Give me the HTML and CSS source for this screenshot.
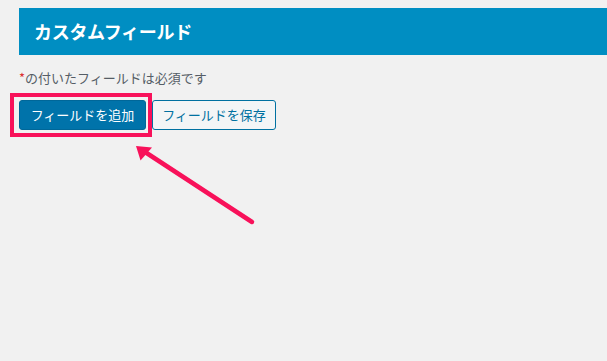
FILE: index.html
```html
<!DOCTYPE html>
<html lang="ja">
<head>
<meta charset="utf-8">
<title>カスタムフィールド</title>
<link rel="stylesheet" href="styles.css">
</head>
<body>
<div class="page">
  <h1 class="title">カスタムフィールド</h1>
  <p class="note"><span class="req">*</span>の付いたフィールドは必須です</p>
  <div class="actions">
    <span class="highlight">
      <button class="btn btn-primary" type="button">フィールドを追加</button>
    </span>
    <button class="btn btn-secondary" type="button">フィールドを保存</button>
  </div>
  <svg class="arrow" width="607" height="361" viewBox="0 0 607 361" aria-hidden="true">
    <line x1="252" y1="222" x2="142" y2="150" stroke="#f8115a" stroke-width="4.5" stroke-linecap="round"/>
    <polygon points="136,146 152,147.5 140.5,160.5" fill="#f8115a"/>
  </svg>
</div>
</body>
</html>
```
FILE: styles.css
```css
html, body {
  margin: 0;
  padding: 0;
  background: #f1f1f1;
}
body {
  font-family: "Noto Sans CJK JP", "Noto Sans", sans-serif;
  color: #50575e;
}
.page {
  position: relative;
  width: 607px;
  height: 361px;
  overflow: hidden;
  padding: 8px 0 0 19px;
  box-sizing: border-box;
}
.title {
  margin: 0;
  height: 47px;
  background: #008ec2;
  color: #fff;
  font-size: 18px;
  font-weight: 700;
  line-height: 47px;
  padding-left: 15px;
  letter-spacing: -0.3px;
}
.note {
  margin: 13px 0 0;
  font-size: 13px;
  line-height: 20px;
  color: #555d66;
}
.req {
  color: #dc3232;
}
.actions {
  display: flex;
  align-items: center;
  margin-top: 12px;
}
.highlight {
  position: relative;
  display: inline-flex;
}
.highlight::after {
  content: "";
  position: absolute;
  left: -9px;
  top: -7px;
  right: -6px;
  bottom: -7px;
  border: 4px solid #f8115a;
  pointer-events: none;
}
.btn {
  font-family: "Noto Sans CJK JP", "Noto Sans", sans-serif;
  font-size: 13px;
  height: 30px;
  line-height: 28px;
  border-radius: 3px;
  padding: 0;
  text-align: center;
  white-space: nowrap;
  box-sizing: border-box;
  cursor: pointer;
  margin: 0;
}
.btn-primary {
  width: 127px;
  background: #0073aa;
  border: 1px solid #006799;
  color: #fff;
}
.btn-secondary {
  width: 124px;
  margin-left: 6px;
  background: #f3f5f6;
  border: 1px solid #0071a1;
  color: #0071a1;
}
.arrow {
  position: absolute;
  left: 0;
  top: 0;
  pointer-events: none;
}
```
